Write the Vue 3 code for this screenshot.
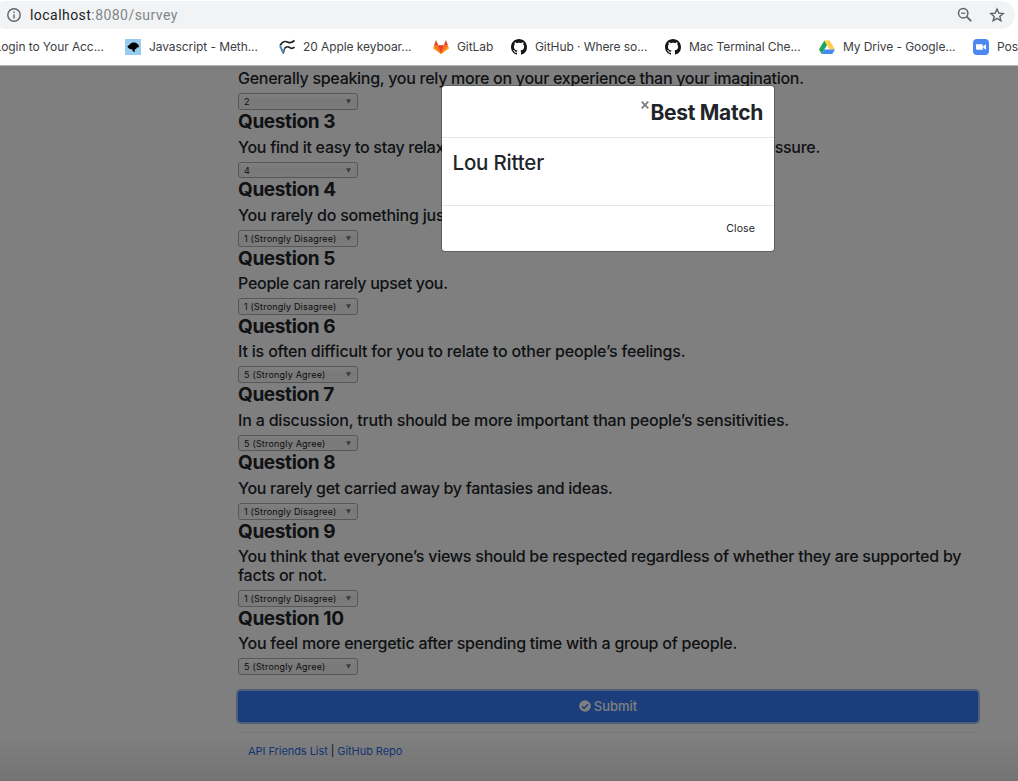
<script setup>
const questions = [
  { title: '', lines: ['Generally speaking, you rely more on your experience than your imagination.'], answer: '2', spacing: -0.28 },
  { title: 'Question 3', lines: ['You find it easy to stay relaxed and focused even when there is some pressure.'], answer: '4', spacing: -0.28 },
  { title: 'Question 4', lines: ['You rarely do something just out of sheer curiosity.'], answer: '1 (Strongly Disagree)', spacing: -0.22 },
  { title: 'Question 5', lines: ['People can rarely upset you.'], answer: '1 (Strongly Disagree)', spacing: -0.28 },
  { title: 'Question 6', lines: ['It is often difficult for you to relate to other people’s feelings.'], answer: '5 (Strongly Agree)', spacing: -0.18 },
  { title: 'Question 7', lines: ['In a discussion, truth should be more important than people’s sensitivities.'], answer: '5 (Strongly Agree)', spacing: -0.19 },
  { title: 'Question 8', lines: ['You rarely get carried away by fantasies and ideas.'], answer: '1 (Strongly Disagree)', spacing: -0.3 },
  { title: 'Question 9', lines: ['You think that everyone’s views should be respected regardless of whether they are supported by', 'facts or not.'], answer: '1 (Strongly Disagree)', spacing: -0.235 },
  { title: 'Question 10', lines: ['You feel more energetic after spending time with a group of people.'], answer: '5 (Strongly Agree)', spacing: -0.235 },
]
const bookmarks = [
  { icon: '', label: 'Login to Your Acc...', cls: 'b0' },
  { icon: 'js', label: 'Javascript - Meth...', cls: 'b1' },
  { icon: 'apple', label: '20 Apple keyboar...', cls: 'b2' },
  { icon: 'gitlab', label: 'GitLab', cls: 'b3' },
  { icon: 'github', label: 'GitHub · Where so...', cls: 'b4' },
  { icon: 'github', label: 'Mac Terminal Che...', cls: 'b5' },
  { icon: 'drive', label: 'My Drive - Google...', cls: 'b6' },
  { icon: 'zoom', label: 'Post', cls: 'b7' },
]
</script>

<template>
  <div class="window">
    <div class="address">
      <svg class="info" width="14" height="14" viewBox="0 0 14 14" fill="none" stroke="#5f6368" stroke-width="1.4">
        <circle cx="7" cy="7" r="6.2" /><path d="M7 6.2v4.2M7 3.4v1.5" />
      </svg>
      <span class="url">localhost<span>:8080/survey</span></span>
      <svg class="mag" width="16" height="16" viewBox="0 0 16 16" fill="none" stroke="#5f6368" stroke-width="1.5">
        <circle cx="6.2" cy="6.2" r="4.7" /><path d="M9.7 9.7l4.5 4.5" stroke-width="1.8" /><path d="M4 6.2h4.4" stroke-width="1.2" />
      </svg>
      <svg class="star" width="16" height="16" viewBox="0 0 16 16" fill="none" stroke="#5f6368" stroke-width="1.4">
        <path d="M8 2l1.75 4.1 4.45.4-3.4 2.9 1.05 4.35L8 11.4l-3.85 2.35L5.2 9.4 1.8 6.5l4.45-.4z" />
      </svg>
    </div>
    <nav class="bookmarks">
      <div v-for="b in bookmarks" :key="b.label" class="bookmark" :class="b.cls">
        <svg v-if="b.icon === 'js'" width="16" height="16" viewBox="0 0 16 16">
          <path fill="#96cdee" d="M0 0h16v16H0z" />
          <path d="M2.3 7.4L5 5.2C6 3.6 8.4 3 10.6 3.7c2 .6 3.6 2.3 3.3 4.6l-2 .2-.8 1.5-1.300.2-.3 3c-1.400-.4-2.200-1.400-2.300-2.900C5.300 10.300 3.200 9.300 2.300 7.400z" />
        </svg>
        <svg v-else-if="b.icon === 'apple'" width="16" height="16" viewBox="0 0 16 16" fill="none" stroke="#222" stroke-width="1.7">
          <path d="M1 6.500C4 1.500 6.500 2 9 3.200c2.500 1.200 4 .5 6.500-1.700M5.500 9.500C8 6.500 9.500 8 11.500 9c1.600.7 2.800.2 4-1" />
          <path d="M5.500 9.500l-1.200 5" stroke-width="1.200" />
          <path d="M1 6.500l3.200 7.500" stroke="#438ac6" stroke-width="2" />
        </svg>
        <svg v-else-if="b.icon === 'gitlab'" width="16" height="16" viewBox="0 0 16 16">
          <path fill="#fca326" d="M1.100 6.200L0 9.400l8 5.600 8-5.600-1.100-3.200z" />
          <path fill="#fc6d26" d="M1.100 6.200H5.300L8 15 2 8.500zM14.900 6.200h-4.200L8 15l6-6.500z" />
          <path fill="#e24329" d="M5.300 6.200h5.400L8 15zM3 1L1.100 6.200h4.200zM13 1l-2.300 5.200h4.200z" />
        </svg>
        <svg v-else-if="b.icon === 'github'" width="16" height="16" viewBox="0 0 16 16" fill="#171515">
          <path d="M8 0C3.580 0 0 3.580 0 8c0 3.540 2.290 6.530 5.470 7.590.4.070.55-.17.55-.38 0-.19-.01-.82-.01-1.490-2.010.37-2.530-.49-2.690-.94-.09-.23-.48-.94-.82-1.130-.28-.15-.68-.52-.01-.53.63-.01 1.080.58 1.230.82.72 1.210 1.870.87 2.330.66.07-.52.28-.87.51-1.070-1.780-.2-3.640-.89-3.640-3.950 0-.87.31-1.590.82-2.150-.08-.2-.36-1.020.08-2.120 0 0 .67-.21 2.200.82.64-.18 1.320-.27 2-.27s1.360.09 2 .27c1.530-1.040 2.200-.82 2.200-.82.44 1.100.16 1.920.08 2.120.51.56.82 1.270.82 2.150 0 3.070-1.870 3.750-3.650 3.950.29.25.54.73.54 1.480 0 1.070-.01 1.930-.01 2.200 0 .21.15.46.55.38A8.010 8.010 0 0 0 16 8c0-4.420-3.580-8-8-8z" />
        </svg>
        <svg v-else-if="b.icon === 'drive'" width="16" height="16" viewBox="0 0 16 16">
          <path fill="#1da362" d="M5.300 1.500L0 10.500l2.700 4.500 5.300-9z" />
          <path fill="#ffcf48" d="M5.300 1.500h5.400l5.300 9h-5.300z" />
          <path fill="#4688f4" d="M5.300 10.500H16L13.300 15H2.700z" />
        </svg>
        <svg v-else-if="b.icon === 'zoom'" width="16" height="16" viewBox="0 0 16 16">
          <rect width="16" height="16" rx="4" fill="#4d87f2" />
          <path fill="#fff" d="M3 5.200h5.500c.8 0 1.300.5 1.300 1.300v4.300H4.400c-.8 0-1.400-.5-1.400-1.300zM10.300 7.200L13 5.300v5.400l-2.700-1.900z" />
        </svg>
        <span>{{ b.label }}</span>
      </div>
    </nav>

    <main class="page">
      <div class="content">
        <section v-for="q in questions" :key="q.title" class="question">
          <h3 v-if="q.title">{{ q.title }}</h3>
          <p :style="{ letterSpacing: q.spacing + 'px' }"><template v-for="(l, i) in q.lines" :key="l"><br v-if="i">{{ l }}</template></p>
          <div class="select">
            <span>{{ q.answer }}</span>
            <svg width="5" height="5" viewBox="0 0 5 5"><path d="M0 .3h5L2.500 4.800z" fill="#777" /></svg>
          </div>
        </section>
        <button class="submit">
          <svg width="12" height="12" viewBox="0 0 12 12"><circle cx="6" cy="6" r="5.800" fill="#fff" /><path d="M2.900 6.200l2.200 2.200 4-4.100" fill="none" stroke="#387af8" stroke-width="1.600" /></svg>
          <span>Submit</span>
        </button>
        <footer><a>API Friends List</a><i>|</i><a>GitHub Repo</a></footer>
      </div>
      <div class="backdrop">
        <div class="modal">
          <header>
            <svg width="8" height="8" viewBox="0 0 8 8"><path d="M.7.7l6.600 6.600M7.300.7L.7 7.300" stroke="#808080" stroke-width="1.900" /></svg>
            <h2>Best Match</h2>
          </header>
          <div class="body">Lou Ritter</div>
          <div class="foot">Close</div>
        </div>
      </div>
    </main>
  </div>
</template>

<style>
body { margin: 0; overflow: hidden; }
</style>

<style scoped>
.window { width: 1018px; height: 781px; display: flex; flex-direction: column; overflow: hidden; background: #fff; font-family: Inter, "Liberation Sans", sans-serif; color: #212529; white-space: nowrap; }
.address { box-sizing: border-box; height: 28px; margin: 1px 3px 0 -8px; padding: 0 10px 0 15px; background: #f1f3f4; border-radius: 14px; display: flex; align-items: center; flex: none; }
.url { margin-left: 9px; font: 400 14px/20px Roboto, sans-serif; letter-spacing: 0.45px; color: #202124; }
.url span { color: #80868b; }
.mag { margin-left: auto; }
.star { margin-left: 16px; }
.bookmarks { height: 36px; display: flex; align-items: center; flex: none; overflow: hidden; }
.bookmark { display: flex; align-items: center; gap: 8px; flex: none; font-size: 12px; line-height: 16px; color: #3c4043; letter-spacing: -0.08px; box-sizing: border-box; }
.b0 { width: 125px; }
.b0 span { margin-left: -5.5px; }
.b1, .b2, .b4, .b5, .b6 { width: 154px; }
.b3 { width: 78px; }
.page { position: relative; flex: 1; border-top: 1px solid #b4b4b4; overflow: hidden; }
.content { margin-left: 238px; width: 740px; padding-top: 2.7px; }
.question { display: flex; flex-direction: column; }
h3 { margin: 0 0 3.5px; font-size: 19px; line-height: 24px; font-weight: 700; letter-spacing: -0.37px; }
p { margin: 0 0 5px; font-size: 16px; line-height: 19px; font-weight: 500; }
.question:first-child p { margin-bottom: 5.7px; }
.select { box-sizing: border-box; width: 120px; height: 16.75px; border: 1px solid #aeaeae; border-radius: 3px; padding: 0 6px 0 5px; display: flex; align-items: center; justify-content: space-between; background: linear-gradient(#fff, #f2f2f2 45%, #f8f8f8); font-size: 9px; letter-spacing: 0.2px; color: #222; }
.submit { width: 740px; height: 31px; margin: 15.4px 0 0; padding: 0; border: 0; border-radius: 3px; background: #387af8; box-shadow: 0 0 0 2px #a1bdf3; color: #fff; font: 500 13px/20px Inter, sans-serif; display: flex; align-items: center; justify-content: center; gap: 3px; }
footer { margin-top: 10px; border-top: 1px solid #f0f0f0; padding: 10px 10px; display: flex; gap: 3px; font-size: 11px; line-height: 16px; letter-spacing: -0.06px; }
footer a { color: #2a6ee8; }
footer i { font-style: normal; }
.backdrop { position: absolute; inset: 0; background: linear-gradient(transparent 670px, rgba(0, 0, 0, .09) 715px), rgba(0, 0, 0, .5); }
.modal { box-sizing: border-box; width: 332px; height: 165px; margin: 20px 0 0 442px; background: #fff; border-radius: 3px; box-shadow: 0 0 0 1px rgba(0, 0, 0, .25); display: flex; flex-direction: column; }
.modal header { box-sizing: border-box; height: 52px; border-bottom: 1px solid #e5e5e5; display: flex; justify-content: flex-end; padding: 14px 11px 0 0; }
.modal header svg { margin: 1px 1px 0 0; }
h2 { margin: 0; font-size: 21px; line-height: 25px; font-weight: 700; letter-spacing: -0.3px; }
.body { box-sizing: border-box; height: 68px; border-bottom: 1px solid #e5e5e5; padding: 12px 11px 0 10.5px; font-size: 20.5px; line-height: 25px; font-weight: 500; letter-spacing: -0.2px; }
.foot { padding: 15px 19px 0 0; text-align: right; font-size: 10.5px; line-height: 16px; letter-spacing: 0.1px; }
</style>
